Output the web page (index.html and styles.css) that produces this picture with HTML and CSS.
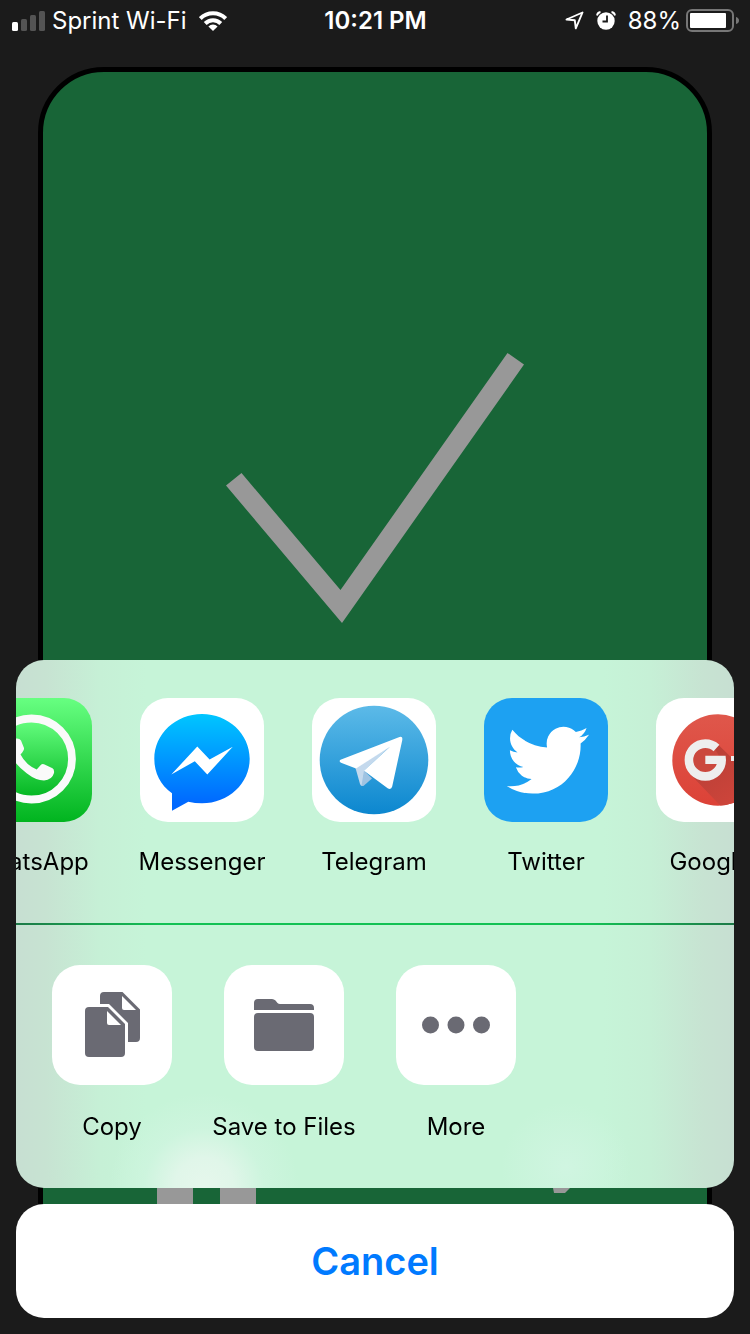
FILE: index.html
```html
<!DOCTYPE html>
<html lang="en">
<head>
<meta charset="utf-8">
<meta name="viewport" content="width=device-width, initial-scale=1">
<title>Share</title>
<link rel="stylesheet" href="styles.css">
</head>
<body>
<div class="screen">
  <header class="status">
    <div class="status-side">
      <svg class="signal" width="33" height="20" viewBox="0 0 33 20" aria-hidden="true">
        <rect x="0" y="11" width="6" height="9" rx="1.5" fill="#fff"/>
        <rect x="9" y="8" width="6" height="12" rx="1.5" fill="#545454"/>
        <rect x="18" y="4" width="6" height="16" rx="1.5" fill="#545454"/>
        <rect x="27" y="0" width="6" height="20" rx="1.5" fill="#545454"/>
      </svg>
      <span class="carrier">Sprint Wi-Fi</span>
      <svg width="28" height="20" viewBox="0 0 28 20" aria-hidden="true">
        <g fill="none" stroke="#fff" stroke-width="4">
          <path d="M1.300 7.600A18 18 0 0 1 26.700 7.600"/>
          <path d="M6.200 12.500A11 11 0 0 1 21.800 12.500"/>
        </g>
        <path fill="#fff" d="M14 20L9.400 15.400A6.500 6.500 0 0 1 18.600 15.400Z"/>
      </svg>
    </div>
    <time class="clock">10:21 PM</time>
    <div class="status-side status-end">
      <svg width="19" height="19" viewBox="0 0 19 19" aria-hidden="true">
        <path d="M1.500 8.500L17.500 1.500L10.800 17.300L9.800 9.300Z" fill="none" stroke="#fff" stroke-width="1.900" stroke-linejoin="round"/>
      </svg>
      <svg class="alarm" width="20" height="19" viewBox="0 0 20 19" aria-hidden="true">
        <circle cx="10" cy="10" r="8.700" fill="#fff"/>
        <path d="M1 4.500Q1.500 1.500 4.500 1M19 4.500Q18.500 1.500 15.500 1" fill="none" stroke="#fff" stroke-width="1.800"/>
        <path d="M11 4.500V10.500H6.500" fill="none" stroke="#1b1b1b" stroke-width="1.800"/>
      </svg>
      <span class="percent">88%</span>
      <svg width="53" height="23" viewBox="0 0 53 23" aria-hidden="true">
        <rect x="1" y="1" width="46" height="21" rx="5" fill="none" stroke="#777" stroke-width="2"/>
        <rect x="4" y="4" width="36" height="15" rx="1" fill="#fff"/>
        <path d="M50 8Q53 9 53 11.500Q53 14 50 15Z" fill="#777"/>
      </svg>
    </div>
  </header>

  <main class="card">
    <svg class="check" width="298" height="270" viewBox="0 0 298 270" aria-label="Correct" role="img">
      <path fill="#989898" d="M0 132.500L15.500 120L114.500 237L281.500 0L298 11.500L116 270Z"/>
    </svg>
    <div class="card-controls">
      <svg width="99" height="90" viewBox="0 0 99 90" aria-hidden="true">
        <path fill="#989898" d="M0 0H36V90H0ZM63 0H99V90H63Z"/>
      </svg>
      <svg width="100" height="90" viewBox="0 0 100 90" aria-hidden="true">
        <path fill="#989898" d="M39 0H66L59 18L54 23H43L42 18Z"/>
      </svg>
    </div>
  </main>

  <section class="sheet" aria-label="Share">
    <div class="panel">
      <div class="row apps">
        <button class="item" type="button">
          <svg class="icon" viewBox="0 0 124 124" aria-hidden="true">
            <defs><linearGradient id="wa" x1="0" y1="0" x2="0" y2="1"><stop offset="0" stop-color="#67ff81"/><stop offset="1" stop-color="#01b41f"/></linearGradient></defs>
            <rect width="124" height="124" fill="url(#wa)"/>
            <path d="M27 80L20 104L44 97" fill="#fafafa"/>
            <circle cx="63.500" cy="61" r="40.500" fill="url(#wa)" stroke="#fafafa" stroke-width="7.800"/>
            <path fill="#fafafa" d="M46 41Q51 39.500 53 42.500L56 50Q56.500 52 52.500 56.500Q58 67 68.700 71.500L73 66.800Q74.300 65.500 76 66.300L84.500 70.300Q86.500 71.500 86 75Q84 82 76 82.500Q68 82.500 59 75.500Q45 65 42 54Q40 46 46 41Z"/>
          </svg>
          <span class="label">WhatsApp</span>
        </button>
        <button class="item" type="button">
          <svg class="icon" viewBox="0 0 124 124" aria-hidden="true">
            <defs><linearGradient id="ms" gradientUnits="userSpaceOnUse" x1="0" y1="16" x2="0" y2="106"><stop offset="0" stop-color="#00c6ff"/><stop offset="1" stop-color="#0068ff"/></linearGradient></defs>
            <rect width="124" height="124" fill="#fff"/>
            <path fill="url(#ms)" d="M62 16C88.300 16 109.700 36 109.700 60.700S88.300 105.300 62 105.300Q55 105.300 48.300 103.800L32 112.700V95.300C20.500 87 14.300 75 14.300 60.700C14.300 36 35.700 16 62 16Z"/>
            <path fill="#fff" d="M31.300 76.500L57.300 48.500L69.600 61.500L92.800 48.700L67.300 76.500L54.800 63.300Z"/>
          </svg>
          <span class="label">Messenger</span>
        </button>
        <button class="item" type="button">
          <svg class="icon" viewBox="0 0 124 124" aria-hidden="true">
            <defs><linearGradient id="tg" x1="0" y1="0" x2="0" y2="1"><stop offset="0" stop-color="#5cbae8"/><stop offset="1" stop-color="#0c87cf"/></linearGradient></defs>
            <rect width="124" height="124" fill="#fff"/>
            <circle cx="62" cy="62" r="54.300" fill="url(#tg)"/>
            <path fill="#c4d9ed" d="M43.500 70L78.500 48L52.500 72.500L50.500 88Q48.500 88 48 86Z"/>
            <path fill="#9fc3e2" d="M52 72.500L60 80.500L52 87.500Q50.500 88.500 49.500 87.500Z"/>
            <path fill="#fff" d="M28.500 61.800L87.500 39Q90.800 38.200 90.300 42L80.200 88.500Q79.300 92 76 90.500L52 72.700L78 48.700L44 70.500L29 64.800Q26.500 63.300 28.500 61.800Z"/>
          </svg>
          <span class="label">Telegram</span>
        </button>
        <button class="item" type="button">
          <svg class="icon" viewBox="0 0 124 124" aria-hidden="true">
            <rect width="124" height="124" fill="#1da1f2"/>
            <path fill="#fff" transform="translate(22.700 21) scale(3.430)" d="M23.953 4.570a10 10 0 01-2.825.775 4.958 4.958 0 002.163-2.723c-.951.555-2.005.959-3.127 1.184a4.920 4.920 0 00-8.384 4.482C7.690 8.095 4.067 6.130 1.640 3.162a4.822 4.822 0 00-.666 2.475c0 1.710.870 3.213 2.188 4.096a4.904 4.904 0 01-2.228-.616v.060a4.923 4.923 0 003.946 4.827 4.996 4.996 0 01-2.212.085 4.936 4.936 0 004.604 3.417 9.867 9.867 0 01-6.102 2.105c-.390 0-.779-.023-1.170-.067a13.995 13.995 0 007.557 2.209c9.053 0 13.998-7.496 13.998-13.985 0-.210 0-.420-.015-.630A9.935 9.935 0 0024 4.590z"/>
          </svg>
          <span class="label">Twitter</span>
        </button>
        <button class="item" type="button">
          <svg class="icon" viewBox="0 0 124 124" aria-hidden="true">
            <defs>
              <linearGradient id="gp" x1="0" y1="0" x2="0" y2="1"><stop offset="0" stop-color="#df574b"/><stop offset="1" stop-color="#dc4237"/></linearGradient>
              <linearGradient id="gps" gradientUnits="userSpaceOnUse" x1="45" y1="50" x2="85" y2="105"><stop offset="0" stop-color="#b73f36"/><stop offset="1" stop-color="#cf453b"/></linearGradient>
              <clipPath id="gpc"><circle cx="62" cy="62" r="45.700"/></clipPath>
            </defs>
            <rect width="124" height="124" fill="#fff"/>
            <circle cx="62" cy="62" r="45.700" fill="url(#gp)"/>
            <path clip-path="url(#gpc)" fill="url(#gps)" d="M62.500 47L124 107V124H80L35 77L49 62Z"/>
            <circle cx="49.300" cy="62" r="14" fill="#cb483e"/>
            <circle cx="49.300" cy="62" r="16.400" fill="none" stroke="#eee" stroke-width="8.600" stroke-dasharray="89 20"/>
            <path fill="#eee" d="M49.300 57.700H69.600L70 62L66 66H49.300Z"/>
            <path fill="#eee" d="M75 58H80V53H85V58H90V63H85V68H80V63H75Z"/>
          </svg>
          <span class="label">Google+</span>
        </button>
      </div>
      <hr class="divider">
      <div class="row actions">
        <button class="item" type="button">
          <svg class="icon" viewBox="0 0 120 120" aria-hidden="true">
            <rect width="120" height="120" fill="#fff"/>
            <path fill="#6a6a73" d="M48 39V31Q48 27 52 27H70.500L88 44.500V73Q88 77 84 77H76V58L57 39Z"/>
            <path fill="#fff" d="M70 31V43Q70 45 72 45H84Z"/>
            <path fill="#6a6a73" d="M33 46Q33 42 37 42H56L73 59V88Q73 92 69 92H37Q33 92 33 88Z"/>
            <path fill="#fff" d="M55 46V58Q55 60 57 60H69Z"/>
          </svg>
          <span class="label">Copy</span>
        </button>
        <button class="item" type="button">
          <svg class="icon" viewBox="0 0 120 120" aria-hidden="true">
            <rect width="120" height="120" fill="#fff"/>
            <path fill="#6a6a73" d="M30 45V38Q30 34 34 34H48Q50 34 51.500 35.500L53.500 38Q54.500 39 56 39H86Q90 39 90 43V45Z"/>
            <rect x="30" y="48" width="60" height="38" rx="4" fill="#6a6a73"/>
          </svg>
          <span class="label">Save to Files</span>
        </button>
        <button class="item" type="button">
          <svg class="icon" viewBox="0 0 120 120" aria-hidden="true">
            <rect width="120" height="120" fill="#fff"/>
            <g fill="#6a6a73"><circle cx="34.500" cy="60" r="8.500"/><circle cx="60" cy="60" r="8.500"/><circle cx="85.500" cy="60" r="8.500"/></g>
          </svg>
          <span class="label">More</span>
        </button>
      </div>
    </div>
    <button class="cancel" type="button">Cancel</button>
  </section>
</div>
</body>
</html>
```
FILE: styles.css
```css
* {
  box-sizing: border-box;
}

body {
  margin: 0;
  background: #1b1b1b;
  font-family: Inter, "Liberation Sans", sans-serif;
}

button {
  margin: 0;
  padding: 0;
  border: 0;
  background: none;
  font: inherit;
  color: inherit;
  cursor: pointer;
}

svg {
  display: block;
  flex: none;
}

.screen {
  display: flex;
  flex-direction: column;
  min-height: 100vh;
}

/* Status bar */
.status {
  display: grid;
  grid-template-columns: 1fr auto 1fr;
  align-items: center;
  height: 41px;
  padding: 0 11px 0 12px;
  color: #fff;
  font-size: 24px;
  line-height: 41px;
  white-space: nowrap;
}

.status-side {
  display: flex;
  align-items: center;
}

.status-end {
  justify-content: flex-end;
}

.carrier {
  margin: 0 12px 0 7px;
}

.clock {
  font-weight: 600;
}

.alarm {
  margin: 0 12px;
}

.percent {
  margin-right: 5px;
}

/* Flash card behind the sheet */
.card {
  display: flex;
  flex: 1;
  flex-direction: column;
  margin: 26px 38px 32px;
  border: 5px solid #000;
  border-radius: 66px;
  background: #186537;
}

.check {
  margin: 281px auto 0;
}

.card-controls {
  display: flex;
  justify-content: space-between;
  margin-top: auto;
  padding: 0 96px 37px 114px;
}

/* Share sheet */
.sheet {
  position: fixed;
  right: 16px;
  bottom: 16px;
  left: 16px;
  display: flex;
  flex-direction: column;
  gap: 16px;
}

.panel {
  overflow: hidden;
  border-radius: 28px;
  background:
    radial-gradient(circle at 188px 100%, #e6f7ec 0, #e0f6e9 30px, #d0f5e0b0 60px, #c6f4d800 95px),
    radial-gradient(circle at 550px 96%, #d0f5e1 0, #c6f4d800 65px),
    linear-gradient(90deg, #c7dfd2 0, #c7e3d2 30px, #c6f0d6 84px, #c6f4d8 130px, #c6f4d8 calc(100% - 130px), #c6f0d6 calc(100% - 84px), #c7e3d2 calc(100% - 30px), #c7dfd2 100%);
}

.row {
  display: flex;
}

.apps {
  gap: 48px;
  margin-left: -48px;
  padding: 38px 0 47px;
}

.actions {
  gap: 52px;
  padding: 40px 36px 47px;
}

.item {
  display: flex;
  flex: none;
  flex-direction: column;
  align-items: center;
  gap: 26px;
  width: 124px;
}

.actions .item {
  gap: 28px;
  width: 120px;
}

.icon {
  width: 100%;
  border-radius: 28px;
}

.label {
  color: #000;
  font-size: 24px;
  line-height: 28px;
  white-space: nowrap;
}

.divider {
  height: 2px;
  margin: 0;
  border: 0;
  background: linear-gradient(90deg, #1d7a48, #12c154 20%, #12c154 80%, #1d7a48);
}

.cancel {
  height: 114px;
  border-radius: 28px;
  background: #fff;
  color: #007aff;
  font-size: 38px;
  font-weight: 600;
}
```
